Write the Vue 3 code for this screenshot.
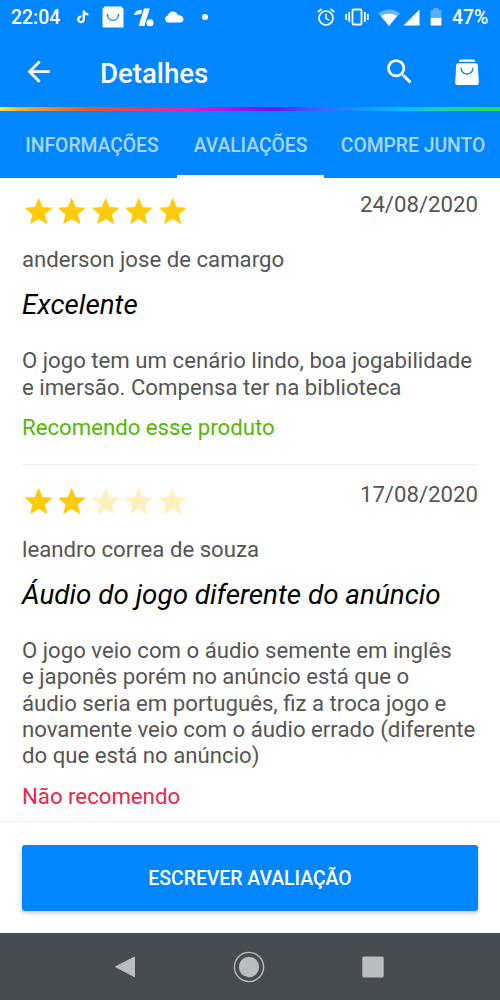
<script setup>
const tabs = [
  { label: 'INFORMAÇÕES', width: 170 },
  { label: 'AVALIAÇÕES', width: 147, active: true },
  { label: 'COMPRE JUNTO', width: 178 },
]

const reviews = [
  {
    rating: 5,
    date: '24/08/2020',
    author: 'anderson jose de camargo',
    title: 'Excelente',
    lines: ['O jogo tem um cenário lindo, boa jogabilidade', 'e imersão. Compensa ter na biblioteca'],
    verdict: 'Recomendo esse produto',
    positive: true,
  },
  {
    rating: 2,
    date: '17/08/2020',
    author: 'leandro correa de souza',
    title: 'Áudio do jogo diferente do anúncio',
    lines: [
      'O jogo veio com o áudio semente em inglês',
      'e japonês porém no anúncio está que o',
      'áudio seria em português, fiz a troca jogo e',
      'novamente veio com o áudio errado (diferente',
      'do que está no anúncio)',
    ],
    verdict: 'Não recomendo',
    positive: false,
  },
]
</script>

<template>
  <div class="screen">
    <header class="top">
      <div class="status">
        <span class="clock">22:04</span>
        <svg class="tiktok" width="12" height="14" viewBox="0 0 12 14">
          <path d="M6.8 0.6V9.4A2.8 2.8 0 1 1 4.6 6.6M6.8 1C7.2 3.2 8.7 4.3 11.4 4.4" fill="none" stroke="#fff" stroke-width="2.3" />
        </svg>
        <svg class="shop" width="22" height="22" viewBox="0 0 22 22">
          <path d="M2.6 0.5H19.4L21.5 3V20.5Q21.5 21.5 20.5 21.5H1.5Q.5 21.5.5 20.5V3Z" fill="#fff" />
          <path d="M5.5 8.8C6 16.2 15.9 16.2 16.5 8.8" fill="none" stroke="#1686e8" stroke-width="1.3" />
          <circle cx="5.5" cy="9" r=".9" fill="#1686e8" /><circle cx="16.5" cy="9" r=".9" fill="#1686e8" />
        </svg>
        <svg class="promo" width="20" height="19" viewBox="0 0 20 19">
          <path d="M0 7C.8 3.6 3.4 2 7 2H8.2L7 6.2C4.4 5.6 3 7.4 0 7Z" fill="#fff" />
          <path d="M10 .6H15.8L10.4 18H4.6Z" fill="#fff" />
          <circle cx="16" cy="14.8" r="3.5" fill="#fff" />
        </svg>
        <svg class="cloud" width="20" height="12" viewBox="0 0 20 12">
          <path d="M4 11.5A3.6 3.6 0 0 1 3.8 4.5C5 1.5 6.9.4 9.2.6C11.8.8 13.4 2.3 14 4.3C17.5 4 19.5 6 19.5 8.2C19.5 10.2 18 11.5 16 11.5Z" fill="#fff" />
        </svg>
        <i class="dot"></i>
        <svg class="alarm" width="18" height="18" viewBox="0 0 18 18" fill="none" stroke="#fff">
          <circle cx="9" cy="10" r="7" stroke-width="1.7" />
          <path d="M9 5.8V10.3L12.2 12.3" stroke-width="1.4" />
          <path d="M.7 4.2L4.5 1M17.3 4.2L13.5 1" stroke-width="1.7" />
        </svg>
        <svg class="vibrate" width="24" height="18" viewBox="0 0 24 18" fill="none" stroke="#fff" stroke-width="1.8">
          <rect x="7.5" y="1.5" width="9" height="15" rx="1" />
          <path d="M4.2 4V14M19.8 4V14M1.2 6V12M22.8 6V12" />
        </svg>
        <svg class="wifi" width="22" height="17" viewBox="0 0 22 17">
          <path d="M0 4.2Q11-3.4 22 4.2L11 17Z" fill="#69b7ff" />
          <path d="M3 6.7Q11 2.6 19 6.7L11 17Z" fill="#fff" />
        </svg>
        <svg class="signal" width="17" height="17" viewBox="0 0 17 17"><path d="M16.5 .5V16.5H.5Z" fill="#fff" /></svg>
        <svg class="battery" width="12" height="18" viewBox="0 0 12 18">
          <path d="M.6 10V3Q.6 2 1.6 2H3.5V0H8.5V2H10.4Q11.4 2 11.4 3V10Z" fill="#5cb1ff" />
          <path d="M.6 10H11.4V16.8Q11.4 17.6 10.6 17.6H1.4Q.6 17.6 .6 16.8Z" fill="#fff" />
        </svg>
        <span class="percent">47%</span>
      </div>

      <div class="appbar">
        <svg class="back" viewBox="0 0 24 24"><path d="M20 11H7.83l5.59-5.59L12 4l-8 8 8 8 1.41-1.41L7.83 13H20v-2z" /></svg>
        <h1>Detalhes</h1>
        <svg class="search" viewBox="0 0 24 24"><path d="M15.5 14h-.79l-.28-.27A6.471 6.471 0 0 0 16 9.5 6.5 6.5 0 1 0 9.5 16c1.61 0 3.09-.59 4.23-1.57l.27.28v.79l5 4.99L20.49 19l-4.99-5zm-6 0C7.01 14 5 11.99 5 9.5S7.01 5 9.5 5 14 7.01 14 9.5 11.99 14 9.5 14z" /></svg>
        <svg class="bag" viewBox="0 0 24 27">
          <path d="M4.4 1Q4.7 .4 5.4 .4H18.6Q19.3 .4 19.6 1L20.2 2.8H3.8Z" />
          <path d="M3 4.2H21Q22.6 4.2 22.8 5.8L23.8 23.5Q23.9 26 21.5 26H2.5Q.1 26 .2 23.5L1.2 5.8Q1.4 4.2 3 4.2Z" />
          <path d="M6 8.8C6.3 17 17.7 17 18 8.8" class="handle" />
        </svg>
      </div>
      <div class="rainbow"></div>
      <nav class="tabs">
        <div v-for="tab in tabs" :key="tab.label" class="tab" :class="{ active: tab.active }" :style="{ width: tab.width + 'px' }">
          <span>{{ tab.label }}</span>
        </div>
      </nav>
    </header>

    <main class="reviews">
      <article v-for="review in reviews" :key="review.author" class="review">
        <div class="head">
          <div class="stars">
            <svg v-for="n in 5" :key="n" viewBox="0 0 24 24" :class="{ off: n > review.rating }">
              <path d="M12 17.27L18.18 21l-1.64-7.03L22 9.24l-7.19-.61L12 2 9.19 8.63 2 9.24l5.46 4.73L5.82 21z" />
            </svg>
          </div>
          <time>{{ review.date }}</time>
        </div>
        <div class="author">{{ review.author }}</div>
        <h2>{{ review.title }}</h2>
        <p><span v-for="line in review.lines" :key="line">{{ line }}</span></p>
        <div class="verdict" :class="{ positive: review.positive }">{{ review.verdict }}</div>
      </article>
    </main>

    <footer class="action"><button>ESCREVER AVALIAÇÃO</button></footer>

    <nav class="system">
      <svg width="22" height="26" viewBox="0 0 22 26"><path d="M20.5 3V22.8L1.5 12.8Z" fill="#b7bdc0" stroke="#b7bdc0" stroke-linejoin="round" /></svg>
      <svg width="32" height="32" viewBox="0 0 32 32"><circle cx="16" cy="16" r="14.6" fill="none" stroke="#b7bdc0" stroke-width="1.4" /><circle cx="16" cy="16" r="10.2" fill="#b7bdc0" /></svg>
      <svg width="22" height="22" viewBox="0 0 22 22"><rect x=".3" y=".5" width="21.4" height="21" rx="1.5" fill="#b7bdc0" /></svg>
    </nav>
  </div>
</template>

<style>
body { margin: 0; background: #fff; }
</style>

<style scoped>
* { box-sizing: border-box; }
svg { display: block; flex: none; }
.screen { width: 500px; height: 1000px; display: flex; flex-direction: column; overflow: hidden; background: #fff; font-family: Roboto, "Liberation Sans", sans-serif; }
.top { flex: none; height: 178px; background: #0086ff; color: #fff; }
.status { height: 34px; display: flex; align-items: center; padding-left: 11px; font-size: 19.4px; font-weight: 500; }
.clock { width: 66px; }
.shop { margin-left: 13px; }
.promo { margin-left: 10px; }
.cloud { margin-left: 10px; }
.dot { width: 6px; height: 6px; margin-left: 18px; border-radius: 50%; background: #fff; }
.alarm { margin-left: 109px; }
.vibrate { margin-left: 10px; }
.wifi { margin-left: 9px; }
.signal { margin-left: 3px; }
.battery { margin-left: 10px; }
.percent { margin-left: 10px; }
.appbar { height: 73px; display: flex; align-items: center; padding: 3px 21px 0 22px; }
.appbar svg { fill: #fff; }
.back, .search { width: 33.3px; height: 33.3px; }
h1 { flex: 1; margin: 3px 0 0 44.7px; font-size: 27.6px; line-height: 34px; font-weight: 500; }
.bag { width: 24px; height: 27px; margin-left: 39px; }
.bag .handle { fill: none; stroke: #0086ff; stroke-width: 1.4; }
.rainbow { height: 4px; background: linear-gradient(90deg, #f9e04a 0, #f0a030 6%, #ee5a1c 17%, #f03a5a 27%, #e81fc0 38%, #a80ee8 48%, #7512f5 55%, #4a55ff 62%, #1497ff 72%, #00c0ff 81%, #18d59a 89%, #22e04a 100%); }
.tabs { height: 67px; display: flex; padding-left: 7px; }
.tab { flex: none; display: flex; align-items: center; justify-content: center; color: #a9d6ff; font-size: 19.3px; font-weight: 500; border-bottom: 3px solid transparent; padding-top: 4px; white-space: nowrap; }
.tab.active { border-color: #fff; }
.reviews { flex: none; height: 643px; padding: 0 22px; overflow: hidden; color: #555; font-size: 22.2px; line-height: 26.4px; }
.review { padding: 13px 0 23px; border-bottom: 1px solid #eee; }
.review + .review { padding-top: 16px; border: 0; }
.head { height: 55px; display: flex; justify-content: space-between; }
.stars { display: flex; padding-top: 4px; }
.stars svg { width: 33.4px; height: 33.3px; fill: #ffcb0a; }
.stars svg.off { fill: #fff0be; }
.author { white-space: nowrap; }
h2 { margin: 16px 0 25.8px; font-size: 27.8px; line-height: 33px; font-weight: 400; font-style: italic; color: #000; white-space: nowrap; }
p { margin: 0 0 14.2px; }
p span { display: block; white-space: nowrap; }
.verdict { color: #e8294c; }
.verdict.positive { color: #53b80b; }
.action { flex: none; height: 112px; padding: 23px 22px 0; border-top: 1px solid #f2f2f2; background: #fff; }
button { display: block; width: 456px; height: 66px; padding: 1px 0 0; border: 0; border-radius: 3px; background: #0086ff; color: #fff; font: 500 19.4px Roboto, "Liberation Sans", sans-serif; box-shadow: 0 2px 4px rgba(0, 0, 0, .22); }
.system { flex: none; height: 67px; display: flex; align-items: center; justify-content: center; gap: 97px; background: #454d53; padding-right: 2px; }
</style>
